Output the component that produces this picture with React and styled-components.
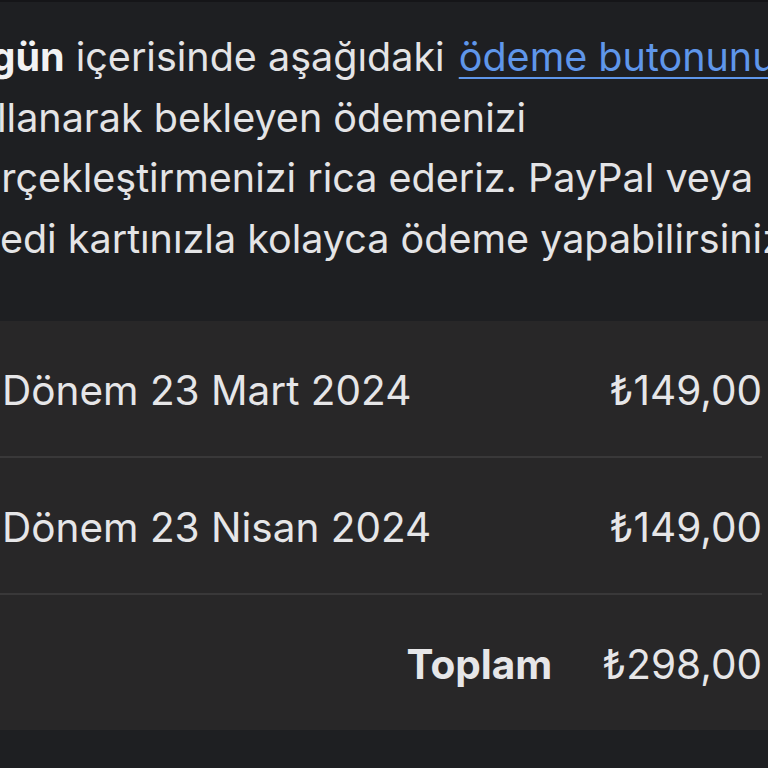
import React from "react";
import styled, { createGlobalStyle } from "styled-components";

const Global = createGlobalStyle`
  html, body { margin: 0; padding: 0; background: #1e1f22; }
  body { width: 768px; height: 768px; overflow: hidden; font-family: Inter, "Noto Sans", sans-serif; }
`;

const Screen = styled.div`
  width: 768px;
  height: 768px;
  overflow: hidden;
  background: #1e1f22;
  display: flex;
  flex-direction: column;
  border-top: 2px solid #151518;
  box-sizing: border-box;
`;

const Message = styled.div`
  padding-top: 25px;
  color: #e4e4e6;
  font-size: 39.5px;
  line-height: 60.5px;
`;

const Line = styled.div`
  white-space: nowrap;
  margin-left: ${(p) => p.$indent}px;
`;

const Strong = styled.b`
  font-weight: 700;
  color: #f2f2f4;
`;

const Link = styled.a`
  color: #5f96ea;
  margin-left: 3px;
  text-decoration: underline;
  text-decoration-thickness: 2px;
  text-underline-offset: 6px;
`;

const Card = styled.div`
  margin-top: 52px;
  background: #282728;
  display: flex;
  flex-direction: column;
`;

const Row = styled.div`
  height: 135px;
  box-sizing: border-box;
  padding: 4px 6px 0 2px;
  display: flex;
  align-items: center;
  justify-content: ${(p) => (p.$total ? "flex-end" : "space-between")};
  gap: 50px;
  color: #e6e6e8;
  font-size: 40.5px;
`;

const Divider = styled.div`
  height: 2px;
  background: #393839;
  margin-right: 6px;
`;

const Label = styled.span`
  font-weight: ${(p) => (p.$bold ? 700 : 400)};
`;

const Amount = styled.span``;

export default function App() {
  return (
    <>
      <Global />
      <Screen>
        <Message>
          <Line $indent={-43}>
            7 <Strong>gün</Strong> içerisinde aşağıdaki <Link href="#">ödeme butonunu</Link>
          </Line>
          <Line $indent={-48}>kullanarak bekleyen ödemenizi</Line>
          <Line $indent={-46}>gerçekleştirmenizi rica ederiz. PayPal veya</Line>
          <Line $indent={-36}>kredi kartınızla kolayca ödeme yapabilirsiniz.</Line>
        </Message>
        <Card>
          <Row>
            <Label>Dönem 23 Mart 2024</Label>
            <Amount>₺149,00</Amount>
          </Row>
          <Divider />
          <Row>
            <Label>Dönem 23 Nisan 2024</Label>
            <Amount>₺149,00</Amount>
          </Row>
          <Divider />
          <Row $total>
            <Label $bold>Toplam</Label>
            <Amount>₺298,00</Amount>
          </Row>
        </Card>
      </Screen>
    </>
  );
}
